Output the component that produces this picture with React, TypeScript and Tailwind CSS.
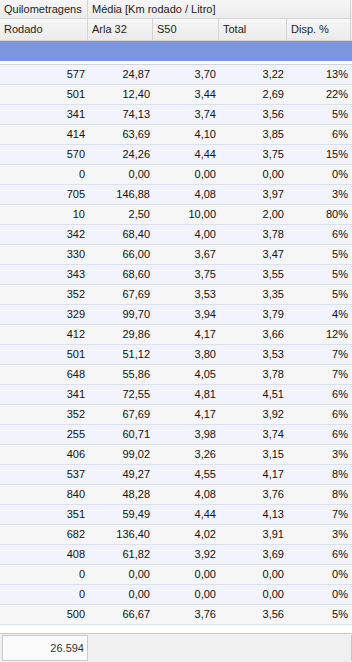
// Grid de médias por veículo: quilometragem rodada e consumo (Km / Litro)

const rows: [string, string, string, string, string][] = [
  ["577", "24,87", "3,70", "3,22", "13%"],
  ["501", "12,40", "3,44", "2,69", "22%"],
  ["341", "74,13", "3,74", "3,56", "5%"],
  ["414", "63,69", "4,10", "3,85", "6%"],
  ["570", "24,26", "4,44", "3,75", "15%"],
  ["0", "0,00", "0,00", "0,00", "0%"],
  ["705", "146,88", "4,08", "3,97", "3%"],
  ["10", "2,50", "10,00", "2,00", "80%"],
  ["342", "68,40", "4,00", "3,78", "6%"],
  ["330", "66,00", "3,67", "3,47", "5%"],
  ["343", "68,60", "3,75", "3,55", "5%"],
  ["352", "67,69", "3,53", "3,35", "5%"],
  ["329", "99,70", "3,94", "3,79", "4%"],
  ["412", "29,86", "4,17", "3,66", "12%"],
  ["501", "51,12", "3,80", "3,53", "7%"],
  ["648", "55,86", "4,05", "3,78", "7%"],
  ["341", "72,55", "4,81", "4,51", "6%"],
  ["352", "67,69", "4,17", "3,92", "6%"],
  ["255", "60,71", "3,98", "3,74", "6%"],
  ["406", "99,02", "3,26", "3,15", "3%"],
  ["537", "49,27", "4,55", "4,17", "8%"],
  ["840", "48,28", "4,08", "3,76", "8%"],
  ["351", "59,49", "4,44", "4,13", "7%"],
  ["682", "136,40", "4,02", "3,91", "3%"],
  ["408", "61,82", "3,92", "3,69", "6%"],
  ["0", "0,00", "0,00", "0,00", "0%"],
  ["0", "0,00", "0,00", "0,00", "0%"],
  ["500", "66,67", "3,76", "3,56", "5%"],
];

const cols = ["w-[88px]", "w-[65px]", "w-[66px]", "w-[68px]", "w-[64px]"];

export default function App() {
  return (
    <div
      className="flex h-[662px] w-[352px] flex-col overflow-hidden bg-white text-[11px] text-[#111]"
      style={{ fontFamily: '"Liberation Sans", Arial, sans-serif' }}
    >
      {/* Header grupo */}
      <div className="flex h-[19px] shrink-0 border-b border-[#d5d5d5] bg-gradient-to-b from-[#f6f6f6] to-[#ececec] text-[#222]">
        <div className="flex w-[88px] items-center border-r border-[#d5d5d5] pl-[4px]">Quilometragens</div>
        <div className="flex w-[263px] items-center border-r border-[#d5d5d5] pl-[4px]">Média [Km rodado / Litro]</div>
        <div className="flex-1" />
      </div>

      {/* Header colunas */}
      <div className="flex h-[22px] shrink-0 border-b border-[#d5d5d5] bg-gradient-to-b from-[#f7f7f7] to-[#ebebeb] text-[#222]">
        {["Rodado", "Arla 32", "S50", "Total", "Disp. %"].map((h, i) => (
          <div key={h} className={cols[i] + " flex items-center border-r border-[#d5d5d5] pl-[4px]"}>
            {h}
          </div>
        ))}
        <div className="flex-1" />
      </div>

      {/* Linha de agrupamento */}
      <div className="h-[20px] shrink-0 bg-[#7b96de]" />

      {/* Dados */}
      <div className="mt-[3px] shrink-0 border-t border-[#d2d4da]">
        {rows.map((r, i) => (
          <div
            key={i}
            className={
              "flex h-[20px] border-b border-[#dce0ea] " +
              (i % 2 === 0 ? "bg-[#f3f4fb]" : "bg-[#f6f6f6]")
            }
          >
            {r.map((v, j) => (
              <div key={j} className={cols[j] + " flex items-center justify-end pr-[3px]"}>
                {v}
              </div>
            ))}
          </div>
        ))}
      </div>

      <div className="flex-1" />

      {/* Totais */}
      <div className="flex h-[29px] shrink-0 border-t border-[#c9c9c9] bg-[#f0f0f0] pl-[2px] pt-[1px]">
        <div className="flex h-[26px] w-[86px] items-center justify-end border border-[#cbcbcb] bg-[#fbfbfb] pr-[3px] text-[#333]">
          26.594
        </div>
        <div className="flex-1" />
        <div className="h-[26px] w-[1px] bg-[#c6c6c6]" />
      </div>
    </div>
  );
}
